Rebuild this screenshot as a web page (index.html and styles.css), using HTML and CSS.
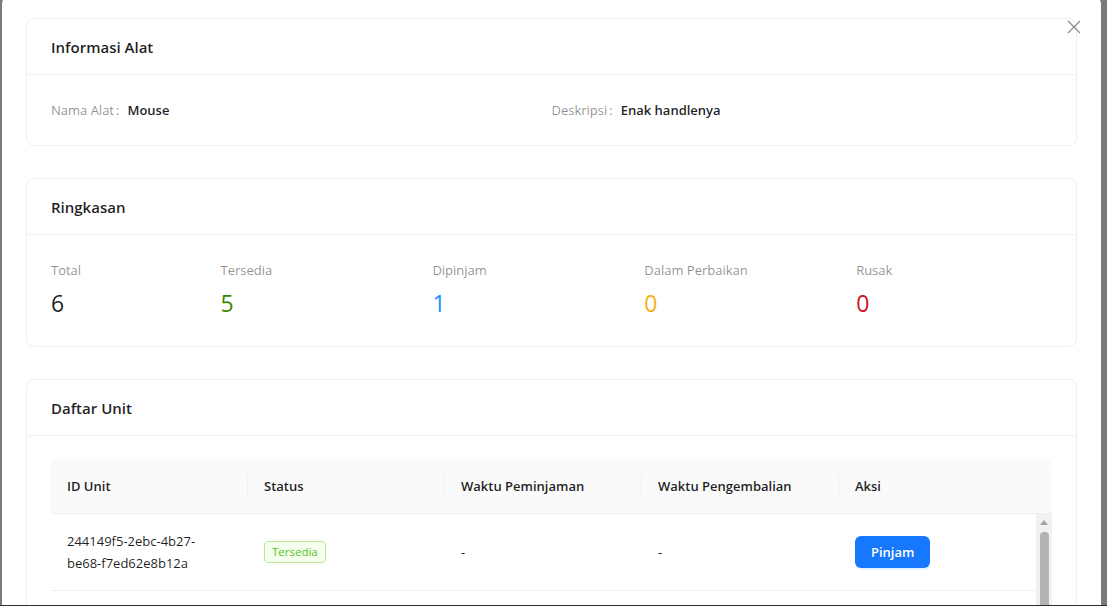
FILE: index.html
```html
<!DOCTYPE html>
<html lang="id">
<head>
<meta charset="utf-8">
<title>Detail Alat</title>
<link rel="stylesheet" href="styles.css">
</head>
<body>
<div class="screen">
  <div class="modal">
    <button class="close" aria-label="Tutup">
      <svg width="14" height="14" viewBox="0 0 14 14"><path d="M1 1 L13 13 M13 1 L1 13" stroke="#8c8c8c" stroke-width="1.3" fill="none"/></svg>
    </button>
    <div class="stack">
      <section class="card">
        <div class="card-head">Informasi Alat</div>
        <div class="card-body">
          <div class="desc">
            <div class="desc-item"><span class="desc-label">Nama Alat</span><span class="desc-value">Mouse</span></div>
            <div class="desc-item"><span class="desc-label">Deskripsi</span><span class="desc-value">Enak handlenya</span></div>
          </div>
        </div>
      </section>

      <section class="card">
        <div class="card-head">Ringkasan</div>
        <div class="card-body">
          <div class="stats">
            <div class="stat"><div class="stat-title">Total</div><div class="stat-value">6</div></div>
            <div class="stat"><div class="stat-title">Tersedia</div><div class="stat-value green">5</div></div>
            <div class="stat"><div class="stat-title">Dipinjam</div><div class="stat-value blue">1</div></div>
            <div class="stat"><div class="stat-title">Dalam Perbaikan</div><div class="stat-value orange">0</div></div>
            <div class="stat"><div class="stat-title">Rusak</div><div class="stat-value red">0</div></div>
          </div>
        </div>
      </section>

      <section class="card">
        <div class="card-head">Daftar Unit</div>
        <div class="card-body table-body">
          <div class="table">
            <div class="thead">
              <div class="th sep">ID Unit</div>
              <div class="th sep">Status</div>
              <div class="th sep">Waktu Peminjaman</div>
              <div class="th sep">Waktu Pengembalian</div>
              <div class="th">Aksi</div>
              <div class="th"></div>
            </div>
            <div class="tbody-wrap">
              <div class="tbody">
                <div class="tr">
                  <div class="td">244149f5-2ebc-4b27-<br>be68-f7ed62e8b12a</div>
                  <div class="td"><span class="tag">Tersedia</span></div>
                  <div class="td">-</div>
                  <div class="td">-</div>
                  <div class="td"><button class="btn">Pinjam</button></div>
                </div>
                <div class="tr tr-empty"></div>
              </div>
              <div class="scrollbar">
                <div class="sb-arrow"></div>
                <div class="sb-thumb"></div>
              </div>
            </div>
          </div>
        </div>
      </section>
    </div>
  </div>
  <div class="bottom-line"></div>
</div>
</body>
</html>
```

FILE: styles.css
```css
* { box-sizing: border-box; }

html, body {
  margin: 0;
  padding: 0;
  height: 606px;
  overflow: hidden;
  background: #7a7a7a;
  font-family: "Open Sans", "Noto Sans", "Liberation Sans", sans-serif;
  font-size: 13px;
  color: rgba(0, 0, 0, 0.88);
}

.screen {
  position: relative;
  height: 606px;
  overflow: hidden;
}

.modal {
  position: relative;
  margin-left: 2px;
  margin-top: -4px;
  width: 1099px;
  height: 640px;
  background: #fff;
  border-radius: 8px;
  padding: 22px 24px 0 24px;
}

.close {
  position: absolute;
  top: 23px;
  right: 19px;
  width: 16px;
  height: 16px;
  padding: 0;
  border: 0;
  background: transparent;
  display: flex;
  align-items: center;
  justify-content: center;
}

.stack {
  display: flex;
  flex-direction: column;
  gap: 32px;
}

.card {
  border: 1px solid #f0f0f0;
  border-radius: 8px;
  background: #fff;
}

.card-head {
  height: 56px;
  padding: 0 24px;
  display: flex;
  align-items: center;
  border-bottom: 1px solid #f0f0f0;
  font-size: 15px;
  font-weight: 600;
  color: rgba(0, 0, 0, 0.88);
}

.card-body {
  padding: 24px;
}

.card-body.table-body {
  padding-top: 23px;
}

/* descriptions */
.desc {
  display: grid;
  grid-template-columns: 1fr 1fr;
}

.desc-item {
  display: flex;
  line-height: 22px;
}

.desc-label {
  color: rgba(0, 0, 0, 0.45);
}

.desc-label::after {
  content: ":";
  margin: 0 8px 0 2px;
}

.desc-value {
  font-weight: 600;
  color: rgba(0, 0, 0, 0.88);
}

/* statistics */
.stats {
  display: grid;
  grid-template-columns: 4fr 5fr 5fr 5fr 5fr;
  margin: 0 -8px;
}

.stat {
  padding: 0 8px;
}

.stat-title {
  color: rgba(0, 0, 0, 0.45);
  line-height: 22px;
  margin-bottom: 4px;
}

.stat-value {
  font-size: 23px;
  line-height: 37px;
  color: rgba(0, 0, 0, 0.88);
}

.green { color: #3f8600; }
.blue { color: #1890ff; }
.orange { color: #faad14; }
.red { color: #cf1322; }

/* table */
.table {
  width: 1001px;
}

.thead {
  display: grid;
  grid-template-columns: 197px 197px 197px 197px 197px 16px;
  background: #fafafa;
  border-radius: 8px 8px 0 0;
  border-bottom: 1px solid #f0f0f0;
}

.th {
  position: relative;
  padding: 16px;
  line-height: 22px;
  font-weight: 600;
  color: rgba(0, 0, 0, 0.88);
  white-space: nowrap;
}

.th.sep::after {
  content: "";
  position: absolute;
  right: 0;
  top: 50%;
  width: 1px;
  height: 22px;
  transform: translateY(-50%);
  background: #f0f0f0;
}

.tbody-wrap {
  display: flex;
}

.tbody {
  width: 985px;
}

.tr {
  display: grid;
  grid-template-columns: repeat(5, 197px);
  border-bottom: 1px solid #f0f0f0;
}

.tr-empty {
  height: 77px;
}

.td {
  padding: 16px;
  line-height: 22px;
  display: flex;
  align-items: center;
}

.tag {
  display: inline-block;
  font-size: 11.5px;
  line-height: 20px;
  padding: 0 7px;
  border: 1px solid #b7eb8f;
  background: #f6ffed;
  color: #52c41a;
  border-radius: 4px;
}

.btn {
  height: 32px;
  padding: 0 16px;
  border: 0;
  border-radius: 6px;
  background: #1677ff;
  color: #fff;
  font-family: inherit;
  font-size: 13px;
  font-weight: 600;
  box-shadow: 0 2px 0 rgba(5, 145, 255, 0.1);
}

.scrollbar {
  width: 16px;
  background: #f1f1f1;
  display: flex;
  flex-direction: column;
  align-items: center;
  padding-top: 6px;
}

.sb-arrow {
  width: 0;
  height: 0;
  border-left: 4px solid transparent;
  border-right: 4px solid transparent;
  border-bottom: 5px solid #a3a3a3;
}

.sb-thumb {
  margin-top: 7px;
  width: 9px;
  height: 200px;
  background: #b3b3b3;
  border-radius: 4px 4px 0 0;
}

.bottom-line {
  position: absolute;
  left: 0;
  right: 0;
  bottom: 0;
  height: 1px;
  background: #2e2e2e;
}
```
